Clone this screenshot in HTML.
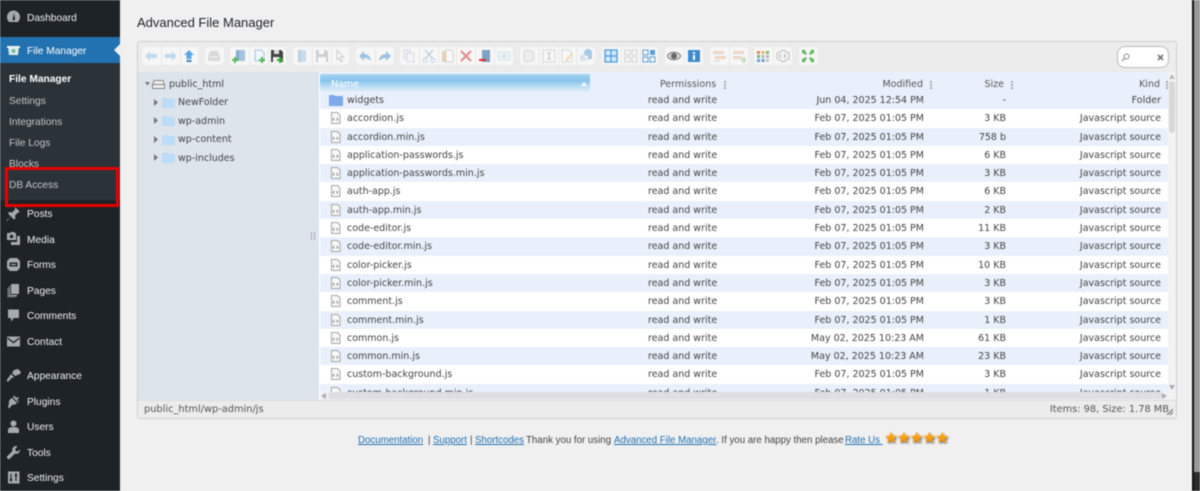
<!DOCTYPE html>
<html><head><meta charset="utf-8"><style>
*{box-sizing:border-box}
html,body{margin:0;padding:0;width:1200px;height:491px;overflow:hidden;background:#f0f0f1}
#root{position:relative;width:1200px;height:491px;overflow:hidden;filter:blur(.4px);font-family:"Liberation Sans",sans-serif}
.abs{position:absolute}
#side{position:absolute;left:0;top:0;width:120px;height:491px;background:#1d2327}
#sub{position:absolute;left:0;top:63px;width:120px;height:137px;background:#2c3338}
#cur{position:absolute;left:0;top:37px;width:120px;height:26px;background:#2271b1}
#arr{position:absolute;left:114px;top:44px;border:6px solid transparent;border-right-color:#f0f0f1;border-left:0}
.m{position:absolute;left:27px;margin-top:1.5px;font-size:10.2px;line-height:14px;color:#f0f0f1;white-space:nowrap}
.s{position:absolute;left:9px;margin-top:1.5px;font-size:10.2px;line-height:14px;color:#c3c4c7;white-space:nowrap}
.i{position:absolute;left:6px;width:15px;height:15px;fill:#a7aaad}
#red{position:absolute;left:5px;top:167px;width:114px;height:40px;border:3px solid #e80000}
#title{position:absolute;left:137px;top:15px;font-size:13px;line-height:16px;color:#1d2327}
#box{position:absolute;left:137px;top:41px;width:1040px;height:378px;border:1px solid #cfcfcf;border-radius:3px;background:#ececec;overflow:hidden}
#tree{position:absolute;left:138px;top:72px;width:181px;height:328px;background:#dde4ec}
#list{position:absolute;left:320px;top:72px;width:848px;height:320px;background:#e9f0fb;overflow:hidden;font-family:"DejaVu Sans",sans-serif;font-size:9.5px;color:#444}
#namehead{position:absolute;left:0;top:2px;width:270px;height:18px;background:linear-gradient(#a9d4f1 0,#85c3ed 35%,#c3e1f6 75%,#e3eff9 100%);color:#fff;padding:4px 0 0 11px;line-height:13px}
.h{position:absolute;top:6px;line-height:13px;white-space:nowrap;color:#555}
.g{position:absolute;top:9px;width:1px;height:8px;border-left:2px dotted #aaa}
#rows{position:absolute;left:0;top:19px;width:848px}
.r{position:relative;height:18.3px;line-height:18px;white-space:nowrap}
.r:nth-child(even){background:#fff}
.r span{position:absolute;top:1px}
.r .n{left:27px}.r .p{left:328px}.r .d{right:244px}.r .z{right:162px}.r .k{right:7px}
.r svg{position:absolute;left:10px;top:3px}
.t{position:absolute;margin-top:1px;font-family:"DejaVu Sans",sans-serif;font-size:9.5px;line-height:12px;color:#444;white-space:nowrap}
.tb{position:absolute;top:47px;height:18px;display:flex;background:#f6f6f6;border-radius:3px;box-shadow:0 0 1px #ddd}
.b{width:18.8px;height:18px;border-left:1px solid #e8e8e8;display:flex;align-items:center;justify-content:center}
.b:first-child{border-left:0}
.b svg{width:14px;height:14px}
.o{opacity:.3}
.f{position:absolute;top:434px;font-size:9.7px;line-height:14px;color:#444;white-space:nowrap}
.f a{color:#2271b1;text-decoration:underline}
</style></head><body><div id="root">

<svg width="0" height="0" style="position:absolute"><defs><symbol id="doc" viewBox="0 0 11 12"><path d="M1.500.5h6l2.500 2.500v8.500H1.500z" fill="#f7f7f7" stroke="#a5a5a5"/><path d="M4.300 6L3 7.300l1.300 1.300M6.700 6L8 7.300 6.700 8.600" fill="none" stroke="#777" stroke-width=".8"/></symbol></defs></svg>

<div id="side"></div><div id="sub"></div><div id="cur"></div><div id="arr"></div>

<svg class="i" style="top:9px" viewBox="0 0 15 15"><path d="M7.500 1.500a6.500 6.500 0 0 0-6.500 6.500c0 2 .8 3.700 2 5h9c1.200-1.300 2-3 2-5a6.500 6.500 0 0 0-6.500-6.500zM7 9l1-5 1 5.500a1.300 1.300 0 1 1-2-.5z"/></svg>
<div class="m" style="top:10px">Dashboard</div>
<svg class="i" style="top:43px;fill:#d9efe6" viewBox="0 0 15 15"><path d="M2 3h11l-1 9H3z"/><path d="M1 3h13v2H1z" fill="#f0f0f1"/><circle cx="7.500" cy="8" r="2" fill="#7fb59d"/></svg>
<div class="m" style="top:43px;color:#fff">File Manager</div>

<div class="s" style="top:71px;color:#fff;font-weight:bold">File Manager</div>
<div class="s" style="top:93px">Settings</div>
<div class="s" style="top:114px">Integrations</div>
<div class="s" style="top:135px">File Logs</div>
<div class="s" style="top:156px">Blocks</div>
<div class="s" style="top:177px">DB Access</div>
<div id="red"></div>

<svg class="i" style="top:206px" viewBox="0 0 15 15"><path d="M9 1l5 5-2 .5-3 3 .5 3-1.500 1-3-3-4 4.500-.5-.5 4.500-4-3-3 1-1.500 3 .5 3-3z"/></svg>
<div class="m" style="top:206px">Posts</div>
<svg class="i" style="top:231px" viewBox="0 0 15 15"><path d="M1 2h3l1-1h3l1 1h1v7H1zM11 5h3v9H5v-3h6z"/><circle cx="5.500" cy="5.500" r="1.800" fill="#1d2327"/></svg>
<div class="m" style="top:232px">Media</div>
<svg class="i" style="top:257px" viewBox="0 0 15 15"><path d="M4 1h7l3 3v7l-3 3H4l-3-3V4z"/><path d="M3.500 5.500h8v4h-8z" fill="#1d2327"/><path d="M5 7h5v1.200H5z"/></svg>
<div class="m" style="top:257px">Forms</div>
<svg class="i" style="top:283px" viewBox="0 0 15 15"><path d="M5 1h8v10H5z"/><path d="M3 3h1v9h7v1.500H3z"/><path d="M1.500 5h1v9H9v.500H1.500z" opacity=".7"/></svg>
<div class="m" style="top:283px">Pages</div>
<svg class="i" style="top:308px" viewBox="0 0 15 15"><path d="M2 1.500h11v8.500H8l-3 3.500V10H2z"/></svg>
<div class="m" style="top:308px">Comments</div>
<svg class="i" style="top:334px" viewBox="0 0 15 15"><path d="M1 2.500h13v10H1z"/><path d="M1.500 4l6 4.500 6-4.500" fill="none" stroke="#1d2327" stroke-width="1.300"/></svg>
<div class="m" style="top:334px">Contact</div>
<svg class="i" style="top:368px" viewBox="0 0 15 15"><path d="M8 2l4-1 3 3-1 2-5 2-3-3zM5 6l3 3-3 1.500L2 14l-1.500-1.500L3 9z"/></svg>
<div class="m" style="top:368px">Appearance</div>
<svg class="i" style="top:394px" viewBox="0 0 15 15"><path d="M6 4l5 5c-1 1.500-3 2-4.500 1.500L3.500 14H2l1-5c-.5-2 1-4 3-5zM8 1.500l2.500 2.500L12 3l1 1-2 2 2 2-1 .5L6.800 3z"/></svg>
<div class="m" style="top:394px">Plugins</div>
<svg class="i" style="top:419px" viewBox="0 0 15 15"><circle cx="7.500" cy="4.500" r="3"/><path d="M2 14v-3c0-2 2-3 5.500-3S13 9 13 11v3z"/></svg>
<div class="m" style="top:419px">Users</div>
<svg class="i" style="top:445px" viewBox="0 0 15 15"><path d="M10 1a3.700 3.700 0 0 0-3.500 5L1.500 11c-.8.800-.8 1.700 0 2.500s1.700.8 2.500 0l5-5A3.700 3.700 0 0 0 14 4.500l-2.300 2-2-.5-.5-2L11.500 1.300z"/></svg>
<div class="m" style="top:445px">Tools</div>
<svg class="i" style="top:470px" viewBox="0 0 15 15"><path d="M2 1.500h11.500v12H2z"/><path d="M5 4v7M4 9l1 2 1-2M10 11V4M9 6l1-2 1 2" stroke="#1d2327" stroke-width="1.200" fill="none"/></svg>
<div class="m" style="top:470px">Settings</div>

<div id="title">Advanced File Manager</div>
<div id="box"></div>

<!-- toolbar -->
<div class="tb" style="left:142px">
<div class="b"><svg class="o" viewBox="0 0 14 14"><path d="M1 7l5-5v3h7v4H6v3z" fill="#4a9fe0"/></svg></div>
<div class="b"><svg class="o" viewBox="0 0 14 14"><path d="M13 7L8 2v3H1v4h7v3z" fill="#4a9fe0"/></svg></div>
<div class="b"><svg viewBox="0 0 14 14"><path d="M7 1l5 5H9.500v4h-5V6H2z" fill="#58a8e4"/><path d="M4.500 11h5v2h-5z" fill="#4a86bc"/></svg></div>
</div>
<div class="tb" style="left:205px"><div class="b"><svg class="o" viewBox="0 0 14 14"><path d="M3 2h8l2 6v4H1V8z" fill="#999"/><path d="M3 8h8" stroke="#fff"/><path d="M7 9l2 2H5z" fill="#5b5"/></svg></div></div>
<div class="tb" style="left:230px">
<div class="b"><svg viewBox="0 0 14 14"><path d="M4 1h9v11H4z" fill="#a3c3e0"/><path d="M4 1h3v11H4z" fill="#85abcf"/><path d="M0 10h2V8h2v2h2v2H4v2H2v-2H0z" fill="#5cba5c"/></svg></div>
<div class="b"><svg viewBox="0 0 14 14"><path d="M3 1h6l3 3v8H3z" fill="#eef5fb" stroke="#a8c6e0"/><path d="M7 10h2V8h2v2h2v2h-2v2H9v-2H7z" fill="#5cba5c"/></svg></div>
<div class="b"><svg viewBox="0 0 14 14"><path d="M1 1h10l2 2v10H1z" fill="#444"/><path d="M4 1h5v4H4z" fill="#ddd"/><path d="M3 8h8v5H3z" fill="#eee"/><path d="M7 10h2V8h2v2h2v2h-2v2H9v-2H7z" fill="#3cab3c"/></svg></div>
</div>
<div class="tb" style="left:293px">
<div class="b"><svg class="o" viewBox="0 0 14 14"><path d="M3 1h8v12H3z" fill="#6fa3d0"/><path d="M3 1h3v12H3z" fill="#3d7fb8"/></svg></div>
<div class="b"><svg class="o" viewBox="0 0 14 14"><path d="M1 1h10l2 2v10H1z" fill="#777"/><path d="M4 1h5v4H4z" fill="#fff"/><path d="M3 8h8v5H3z" fill="#fff"/></svg></div>
<div class="b"><svg class="o" viewBox="0 0 14 14"><path d="M4 1l7 7H7.500l2 4-1.500.8-2-4L4 11z" fill="#fff" stroke="#777"/></svg></div>
</div>
<div class="tb" style="left:356px">
<div class="b"><svg viewBox="0 0 14 14" opacity=".5"><path d="M6 2L1 7l5 5V9c3 0 5 1 7 3 0-4-3-7-7-7z" fill="#4a8fcf"/></svg></div>
<div class="b"><svg viewBox="0 0 14 14" opacity=".5"><path d="M8 2l5 5-5 5V9c-3 0-5 1-7 3 0-4 3-7 7-7z" fill="#4a8fcf"/></svg></div>
</div>
<div class="tb" style="left:400px">
<div class="b"><svg class="o" viewBox="0 0 14 14"><path d="M2 1h6v9H2z" fill="#dde8f2" stroke="#99b"/><path d="M5 4h7v9H5z" fill="#eef" stroke="#99b"/></svg></div>
<div class="b"><svg class="o" viewBox="0 0 14 14"><path d="M3 1l8 9M11 1l-8 9" stroke="#557ea8" stroke-width="1.500"/><circle cx="3" cy="11.500" r="2" fill="none" stroke="#4a8fcf"/><circle cx="11" cy="11.500" r="2" fill="none" stroke="#4a8fcf"/></svg></div>
<div class="b"><svg viewBox="0 0 14 14" opacity=".45"><path d="M2 2h10v11H2z" fill="#d9a066"/><path d="M6 1h6l1 3v9H6z" fill="#fff" stroke="#aaa"/></svg></div>
<div class="b"><svg viewBox="0 0 14 14" opacity=".55"><path d="M2 2l10 10M12 2L2 12" stroke="#d33" stroke-width="2"/></svg></div>
<div class="b"><svg viewBox="0 0 14 14" opacity=".85"><path d="M4 1h8v12H4z" fill="#6b93bc"/><path d="M1 10h7v2H1z" fill="#d11"/></svg></div>
<div class="b"><svg class="o" viewBox="0 0 14 14"><path d="M1 3h12v8H1z" fill="#cfe4f5" stroke="#9cc"/><path d="M5 8l3-3v3z" fill="#37a"/></svg></div>
</div>
<div class="tb" style="left:520px">
<div class="b"><svg class="o" viewBox="0 0 14 14"><path d="M5 1l7 2v8l-7 2-3-2V3z" fill="#ddd" stroke="#999"/></svg></div>
<div class="b"><svg class="o" viewBox="0 0 14 14"><path d="M1 1h12v12H1z" fill="none" stroke="#555" stroke-dasharray="1.500 1"/><path d="M7 4v6M5 4h4M5 10h4" stroke="#555"/></svg></div>
<div class="b"><svg class="o" viewBox="0 0 14 14"><path d="M2 1h7l3 3v9H2z" fill="#fff" stroke="#999"/><path d="M5 11l6-7 2 1.500-6 7z" fill="#da3"/></svg></div>
<div class="b"><svg viewBox="0 0 14 14" opacity=".5"><path d="M5 3a4 4 0 0 1 8 2v5H5z" fill="#5c9ed6"/><path d="M1 6h6v6H1z" fill="#bcd"/><path d="M6 6l4 2-4 2z" fill="#fff"/></svg></div>
</div>
<div class="tb" style="left:602px">
<div class="b"><svg viewBox="0 0 14 14"><path d="M1 1h12v12H1zM7 1v12M1 7h12" fill="#d5e9fb" stroke="#4b9bdf" stroke-width="1.300"/></svg></div>
<div class="b"><svg class="o" viewBox="0 0 14 14"><path d="M1 1h5v5H1zM8 1h5v5H8zM1 8h5v5H1zM8 8h5v5H8z" fill="none" stroke="#888"/></svg></div>
<div class="b"><svg viewBox="0 0 14 14"><path d="M1 1h5v5H1zM1 8h5v5H1zM8 8h5v5H8z" fill="none" stroke="#5a9fd8"/><path d="M8 1h5v5H8z" fill="#5a9fd8"/></svg></div>
</div>
<div class="tb" style="left:665px">
<div class="b"><svg viewBox="0 0 14 14"><path d="M0 7c3-5 11-5 14 0-3 5-11 5-14 0z" fill="#ddd" stroke="#777"/><circle cx="7" cy="7" r="3" fill="#666"/></svg></div>
<div class="b"><svg viewBox="0 0 14 14"><path d="M1 1h12v12H1z" fill="#3f8acb"/><path d="M6 3h2v2H6zM6 6h2v5H6z" fill="#fff"/></svg></div>
</div>
<div class="tb" style="left:710px">
<div class="b"><svg class="o" viewBox="0 0 14 14"><path d="M1 2h11v3H1zM3 7h11v3H3z" fill="#d9905a"/><path d="M2 11h6v2H2z" fill="#bbb"/></svg></div>
<div class="b"><svg class="o" viewBox="0 0 14 14"><path d="M1 2h11v3H1zM1 7h9v3H1z" fill="#d9905a"/><path d="M9 10h2V8h2v2h1v2h-1v2h-2v-2H9z" fill="#3cab3c"/></svg></div>
</div>
<div class="tb" style="left:754px">
<div class="b"><svg viewBox="0 0 14 14" opacity=".8"><path d="M1 2h3v3H1z" fill="#d63"/><path d="M5.500 2h3v3h-3z" fill="#da3"/><path d="M10 2h3v3h-3z" fill="#5a5"/><path d="M1 6h3v3H1z" fill="#5a5"/><path d="M5.500 6h3v3h-3z" fill="#aaa"/><path d="M10 6h3v3h-3z" fill="#aaa"/><path d="M1 10h3v3H1z" fill="#48c"/><path d="M5.500 10h3v3h-3z" fill="#48c"/><path d="M10 10h3v3h-3z" fill="#bbb"/></svg></div>
<div class="b"><svg viewBox="0 0 14 14" opacity=".5"><path d="M7 1l6 3v6l-6 3-6-3V4z" fill="#eee" stroke="#888"/><path d="M4 5v4M9 5v4" stroke="#666"/></svg></div>
</div>
<div class="tb" style="left:799px"><div class="b"><svg viewBox="0 0 14 14"><path d="M1 1h4L3.800 2.200 6 4.400 4.400 6 2.200 3.800 1 5zM13 1v4l-1.200-1.200L9.600 6 8 4.400l2.200-2.200L9 1zM1 13V9l1.200 1.200L4.400 8 6 9.600l-2.200 2.200L5 13zM13 13H9l1.200-1.200L8 9.600 9.600 8l2.200 2.200L13 9z" fill="#5cb35c"/></svg></div></div>

<!-- search -->
<div class="abs" style="left:1117px;top:46px;width:52px;height:22px;background:#fff;border:1px solid #bbb;border-radius:8px"></div>
<svg class="abs" style="left:1121px;top:53px" width="9" height="9" viewBox="0 0 9 9"><circle cx="5.500" cy="3.500" r="2.500" fill="none" stroke="#888" stroke-width="1"/><path d="M3.500 5.500L1 8" stroke="#888" stroke-width="1.200"/></svg>
<svg class="abs" style="left:1157px;top:54px" width="7" height="7" viewBox="0 0 7 7"><path d="M1 1l5 5M6 1L1 6" stroke="#777" stroke-width="1.700"/></svg>

<!-- tree -->
<div id="tree"></div>
<svg class="abs" style="left:145px;top:82px" width="5" height="4"><path d="M0 0h5L2.500 3.500z" fill="#777"/></svg>
<svg class="abs" style="left:152px;top:80px" width="13" height="9" viewBox="0 0 13 9"><path d="M2 .5h9l1.500 4v4H.5v-4z" fill="#eee" stroke="#888"/><path d="M1 4.500h11" stroke="#888"/></svg>
<div class="t" style="left:169px;top:78px">public_html</div>
<svg class="abs" style="left:154px;top:99px" width="4" height="7"><path d="M0 0l4 3.500L0 7z" fill="#777"/></svg>
<svg class="abs" style="left:162px;top:97px" width="13" height="11"><path d="M0 1h5l1 1h7v9H0z" fill="#bcdcf7"/></svg>
<div class="t" style="left:178px;top:96px">NewFolder</div>
<svg class="abs" style="left:154px;top:117px" width="4" height="7"><path d="M0 0l4 3.500L0 7z" fill="#777"/></svg>
<svg class="abs" style="left:162px;top:115px" width="13" height="11"><path d="M0 1h5l1 1h7v9H0z" fill="#bcdcf7"/></svg>
<div class="t" style="left:178px;top:115px">wp-admin</div>
<svg class="abs" style="left:154px;top:136px" width="4" height="7"><path d="M0 0l4 3.500L0 7z" fill="#777"/></svg>
<svg class="abs" style="left:162px;top:134px" width="13" height="11"><path d="M0 1h5l1 1h7v9H0z" fill="#bcdcf7"/></svg>
<div class="t" style="left:178px;top:133px">wp-content</div>
<svg class="abs" style="left:154px;top:154px" width="4" height="7"><path d="M0 0l4 3.500L0 7z" fill="#777"/></svg>
<svg class="abs" style="left:162px;top:152px" width="13" height="11"><path d="M0 1h5l1 1h7v9H0z" fill="#bcdcf7"/></svg>
<div class="t" style="left:178px;top:152px">wp-includes</div>
<div class="abs" style="left:311px;top:232px;width:4px;height:8px;border-left:1px solid #aab;border-right:1px solid #aab"></div>
<div class="abs" style="left:319px;top:72px;width:1px;height:328px;background:#fff"></div>

<!-- list -->
<div id="list">
<div id="namehead">Name<svg class="abs" style="left:261px;top:8px" width="6" height="4"><path d="M0 4l3-4 3 4z" fill="#fff"/></svg></div>
<div class="h" style="left:340px">Permissions</div><div class="g" style="left:404px"></div>
<div class="h" style="right:245px">Modified</div><div class="g" style="left:610px"></div>
<div class="h" style="right:164px">Size</div><div class="g" style="left:691px"></div>
<div class="h" style="right:8px">Kind</div><div class="g" style="left:846px"></div>
<div id="rows">
<div class="r"><svg width="14" height="12" style="left:9px;top:3px"><path d="M0 1h5l1 1h8v10H0z" fill="#7ea9ea"/></svg><span class="n">widgets</span><span class="p">read and write</span><span class="d">Jun 04, 2025 12:54 PM</span><span class="z">-</span><span class="k">Folder</span></div>
<div class="r"><svg width="11" height="12"><use href="#doc"/></svg><span class="n">accordion.js</span><span class="p">read and write</span><span class="d">Feb 07, 2025 01:05 PM</span><span class="z">3 KB</span><span class="k">Javascript source</span></div>
<div class="r"><svg width="11" height="12"><use href="#doc"/></svg><span class="n">accordion.min.js</span><span class="p">read and write</span><span class="d">Feb 07, 2025 01:05 PM</span><span class="z">758 b</span><span class="k">Javascript source</span></div>
<div class="r"><svg width="11" height="12"><use href="#doc"/></svg><span class="n">application-passwords.js</span><span class="p">read and write</span><span class="d">Feb 07, 2025 01:05 PM</span><span class="z">6 KB</span><span class="k">Javascript source</span></div>
<div class="r"><svg width="11" height="12"><use href="#doc"/></svg><span class="n">application-passwords.min.js</span><span class="p">read and write</span><span class="d">Feb 07, 2025 01:05 PM</span><span class="z">3 KB</span><span class="k">Javascript source</span></div>
<div class="r"><svg width="11" height="12"><use href="#doc"/></svg><span class="n">auth-app.js</span><span class="p">read and write</span><span class="d">Feb 07, 2025 01:05 PM</span><span class="z">6 KB</span><span class="k">Javascript source</span></div>
<div class="r"><svg width="11" height="12"><use href="#doc"/></svg><span class="n">auth-app.min.js</span><span class="p">read and write</span><span class="d">Feb 07, 2025 01:05 PM</span><span class="z">2 KB</span><span class="k">Javascript source</span></div>
<div class="r"><svg width="11" height="12"><use href="#doc"/></svg><span class="n">code-editor.js</span><span class="p">read and write</span><span class="d">Feb 07, 2025 01:05 PM</span><span class="z">11 KB</span><span class="k">Javascript source</span></div>
<div class="r"><svg width="11" height="12"><use href="#doc"/></svg><span class="n">code-editor.min.js</span><span class="p">read and write</span><span class="d">Feb 07, 2025 01:05 PM</span><span class="z">3 KB</span><span class="k">Javascript source</span></div>
<div class="r"><svg width="11" height="12"><use href="#doc"/></svg><span class="n">color-picker.js</span><span class="p">read and write</span><span class="d">Feb 07, 2025 01:05 PM</span><span class="z">10 KB</span><span class="k">Javascript source</span></div>
<div class="r"><svg width="11" height="12"><use href="#doc"/></svg><span class="n">color-picker.min.js</span><span class="p">read and write</span><span class="d">Feb 07, 2025 01:05 PM</span><span class="z">3 KB</span><span class="k">Javascript source</span></div>
<div class="r"><svg width="11" height="12"><use href="#doc"/></svg><span class="n">comment.js</span><span class="p">read and write</span><span class="d">Feb 07, 2025 01:05 PM</span><span class="z">3 KB</span><span class="k">Javascript source</span></div>
<div class="r"><svg width="11" height="12"><use href="#doc"/></svg><span class="n">comment.min.js</span><span class="p">read and write</span><span class="d">Feb 07, 2025 01:05 PM</span><span class="z">1 KB</span><span class="k">Javascript source</span></div>
<div class="r"><svg width="11" height="12"><use href="#doc"/></svg><span class="n">common.js</span><span class="p">read and write</span><span class="d">May 02, 2025 10:23 AM</span><span class="z">61 KB</span><span class="k">Javascript source</span></div>
<div class="r"><svg width="11" height="12"><use href="#doc"/></svg><span class="n">common.min.js</span><span class="p">read and write</span><span class="d">May 02, 2025 10:23 AM</span><span class="z">23 KB</span><span class="k">Javascript source</span></div>
<div class="r"><svg width="11" height="12"><use href="#doc"/></svg><span class="n">custom-background.js</span><span class="p">read and write</span><span class="d">Feb 07, 2025 01:05 PM</span><span class="z">3 KB</span><span class="k">Javascript source</span></div>
<div class="r"><svg width="11" height="12"><use href="#doc"/></svg><span class="n">custom-background.min.js</span><span class="p">read and write</span><span class="d">Feb 07, 2025 01:05 PM</span><span class="z">1 KB</span><span class="k">Javascript source</span></div>
</div></div>

<!-- scrollbars -->
<div class="abs" style="left:1168px;top:72px;width:8px;height:328px;background:#f3f3f3"></div>
<div class="abs" style="left:1169px;top:81px;width:6px;height:52px;background:#d8d8da;border-radius:3px"></div>
<svg class="abs" style="left:1169px;top:74px" width="6" height="5"><path d="M0 5l3-5 3 5z" fill="#bbb"/></svg>
<svg class="abs" style="left:1169px;top:385px" width="6" height="5"><path d="M0 0l3 5 3-5z" fill="#aab"/></svg>
<div class="abs" style="left:320px;top:392px;width:848px;height:7px;background:#f1f1f1"></div>
<div class="abs" style="left:328px;top:392px;width:834px;height:7px;background:#dfdfe1;border-radius:3px"></div>
<svg class="abs" style="left:321px;top:393px" width="5" height="6"><path d="M5 0L0 3l5 3z" fill="#aab"/></svg>
<svg class="abs" style="left:1162px;top:393px" width="5" height="6"><path d="M0 0l5 3-5 3z" fill="#aab"/></svg>

<!-- status -->
<div class="abs" style="left:138px;top:400px;width:1038px;height:18px;background:#ececec;border-top:1px solid #ddd"></div>
<div class="t" style="left:144px;top:403px;color:#555;font-size:9.8px">public_html/wp-admin/js</div>
<div class="t" style="right:31px;top:403px;color:#555;font-size:9.8px">Items: 98, Size: 1.78 MB</div>
<svg class="abs" style="left:1167px;top:409px" width="6" height="6"><path d="M0 6l6-6M3 6l3-3" stroke="#777" stroke-width="1.200"/></svg>

<!-- footer -->
<div class="f" style="left:358px"><a>Documentation</a></div>
<div class="f" style="left:428px">|</div>
<div class="f" style="left:433px"><a>Support</a></div>
<div class="f" style="left:470px">|</div>
<div class="f" style="left:475px"><a>Shortcodes</a></div>
<div class="f" style="left:526px">Thank you for using</div>
<div class="f" style="left:614px"><a>Advanced File Manager</a></div>
<div class="f" style="left:716px">. If you are happy then please</div>
<div class="f" style="left:845px"><a>Rate Us&nbsp;</a></div>
<svg class="abs" style="left:884px;top:430px" width="68" height="20" viewBox="0 0 68 20"><defs><linearGradient id="st" x1="0" y1="0" x2="0" y2="1"><stop offset="0" stop-color="#ffb52e"/><stop offset="1" stop-color="#f08a00"/></linearGradient><filter id="sh"><feDropShadow dx="1" dy="1.500" stdDeviation="1" flood-color="#000" flood-opacity=".55"/></filter></defs><g fill="url(#st)" filter="url(#sh)"><path d="M7 1.500l1.800 4 4.200.4-3.200 2.800 1 4.300L7 10.500 3.200 13l1-4.300L1 5.900l4.200-.4z"/><path transform="translate(12.800)" d="M7 1.500l1.800 4 4.200.4-3.200 2.800 1 4.300L7 10.500 3.200 13l1-4.300L1 5.900l4.200-.4z"/><path transform="translate(25.600)" d="M7 1.500l1.800 4 4.200.4-3.200 2.800 1 4.300L7 10.500 3.200 13l1-4.300L1 5.900l4.200-.4z"/><path transform="translate(38.400)" d="M7 1.500l1.800 4 4.200.4-3.200 2.800 1 4.300L7 10.500 3.200 13l1-4.300L1 5.900l4.200-.4z"/><path transform="translate(51.200)" d="M7 1.500l1.800 4 4.200.4-3.200 2.800 1 4.300L7 10.500 3.200 13l1-4.300L1 5.900l4.200-.4z"/></g></svg>

<!-- browser scrollbar -->
<div class="abs" style="left:1192px;top:0;width:8px;height:491px;background:#999;border-left:2px solid #111"></div>
<div class="abs" style="left:1192px;top:472px;width:8px;height:19px;background:#2b2b2b;border-left:2px solid #111"></div>
</div></body></html>
